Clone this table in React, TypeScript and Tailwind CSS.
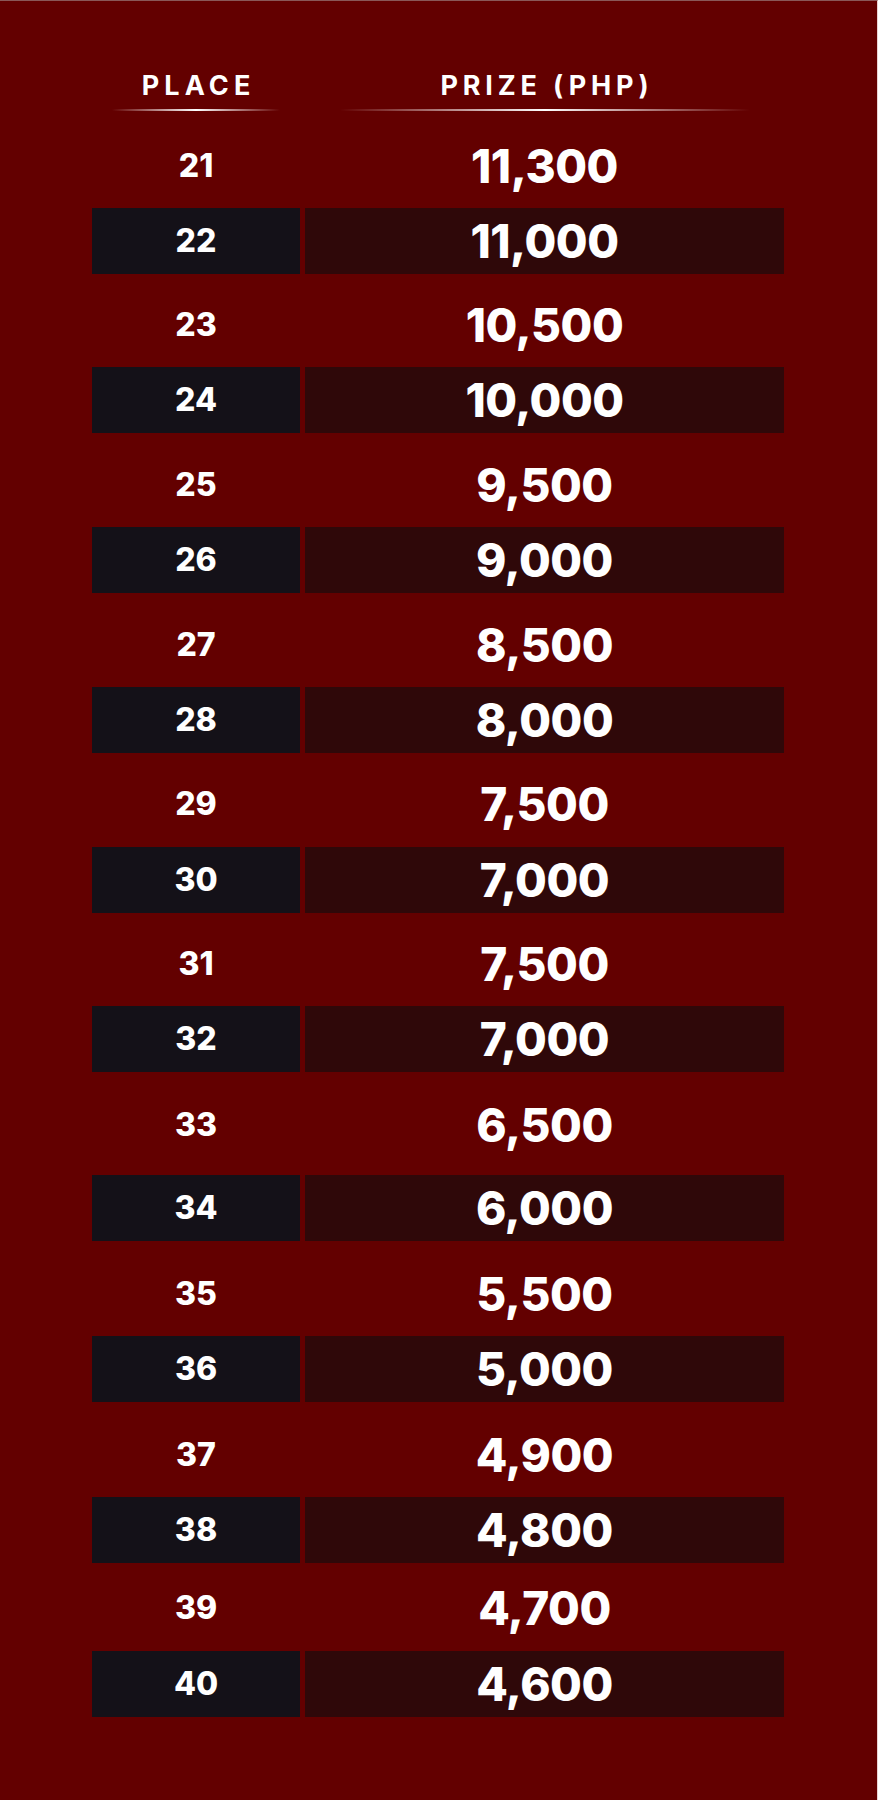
const rows = [
  { place: '21', prize: '11,300', odd: 'h-[97px] pt-[13px]' },
  { place: '22', prize: '11,000' },
  { place: '23', prize: '10,500', odd: 'h-[93px] pt-[9px]' },
  { place: '24', prize: '10,000' },
  { place: '25', prize: '9,500', odd: 'h-[94px] pt-[10px]' },
  { place: '26', prize: '9,000' },
  { place: '27', prize: '8,500', odd: 'h-[94px] pt-[10px]' },
  { place: '28', prize: '8,000' },
  { place: '29', prize: '7,500', odd: 'h-[94px] pt-[8px]' },
  { place: '30', prize: '7,000' },
  { place: '31', prize: '7,500', odd: 'h-[93px] pt-[9px]' },
  { place: '32', prize: '7,000' },
  { place: '33', prize: '6,500', odd: 'h-[103px] pt-[3px]' },
  { place: '34', prize: '6,000' },
  { place: '35', prize: '5,500', odd: 'h-[95px] pt-[11px]' },
  { place: '36', prize: '5,000' },
  { place: '37', prize: '4,900', odd: 'h-[95px] pt-[11px]' },
  { place: '38', prize: '4,800' },
  { place: '39', prize: '4,700', odd: 'h-[88px] pt-[2px]' },
  { place: '40', prize: '4,600' },
];

export default function App() {
  return (
    <div className="w-[878px] h-[1800px] bg-[#630000] border-t border-t-[#8a5858] border-r border-r-[#ead2d2] pl-[92px] font-['Inter',sans-serif] text-white">
      {/* header */}
      <div className="flex gap-[5px] pt-[71px]">
        <div className="w-[208px] flex flex-col items-center">
          <span className="text-[27px] leading-none font-bold tracking-[0.19em] pl-[0.19em]">PLACE</span>
          <div className="mt-[10px] w-[168px] h-[2px] bg-linear-to-r from-transparent via-white to-transparent" />
        </div>
        <div className="w-[479px] flex flex-col items-center">
          <span className="text-[27px] leading-none font-bold tracking-[0.18em] pl-[0.18em]">PRIZE (PHP)</span>
          <div className="mt-[10px] w-[410px] h-[2px] bg-linear-to-r from-transparent via-white to-transparent" />
        </div>
      </div>

      {/* rows */}
      <div className="flex flex-col">
        {rows.map(r =>
          r.odd ? (
            <div key={r.place} className={`flex gap-[5px] items-center ${r.odd}`}>
              <div className="w-[208px] text-center text-[32px] leading-none font-extrabold">{r.place}</div>
              <div className="w-[479px] text-center text-[46px] leading-none font-extrabold tracking-[-0.01em]">{r.prize}</div>
            </div>
          ) : (
            <div key={r.place} className="flex gap-[5px] h-[66px]">
              <div className="w-[208px] bg-[#141118] flex items-center justify-center text-[32px] leading-none font-extrabold">
                {r.place}
              </div>
              <div className="w-[479px] bg-[#2f0809] flex items-center justify-center text-[46px] leading-none font-extrabold tracking-[-0.01em]">
                {r.prize}
              </div>
            </div>
          )
        )}
      </div>
    </div>
  );
}
